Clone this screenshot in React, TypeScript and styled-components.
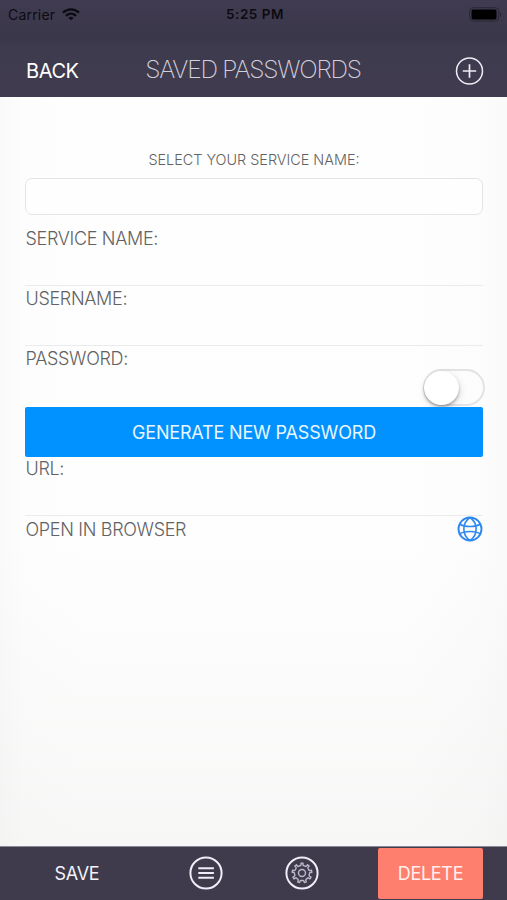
import React from 'react';
import styled, { createGlobalStyle } from 'styled-components';

const GlobalStyle = createGlobalStyle`
  * { box-sizing: border-box; }
  body { margin: 0; font-family: Inter, "Liberation Sans", sans-serif; }
  button { font-family: inherit; border: 0; padding: 0; background: none; }
`;

const Screen = styled.div`
  width: 507px;
  height: 900px;
  display: flex;
  flex-direction: column;
  overflow: hidden;
  background:
    linear-gradient(180deg, transparent 60%, rgba(120, 120, 110, 0.05) 95%),
    linear-gradient(90deg, #fafafa 0, #fdfdfd 25px, #fefefe 80px, #fefefe 410px, #fcfcfc 480px, #fafafa 507px);
`;

const Header = styled.header`
  height: 97px;
  flex: none;
  background: linear-gradient(#403b50 0, #3b374a 38px, #3f3b4e 48px, #403b4e 97px);
`;

const StatusBar = styled.div`
  height: 28px;
  display: grid;
  grid-template-columns: 1fr auto 1fr;
  align-items: center;
  padding: 0 5px 0 8px;
  color: #0c0b12;
  font-size: 14px;
`;

const Carrier = styled.div`
  display: flex;
  align-items: center;
  gap: 7px;
  letter-spacing: 0.2px;
`;

const Clock = styled.div`
  font-size: 13.5px;
  font-weight: 600;
  letter-spacing: 0.5px;
`;

const Battery = styled.svg`
  justify-self: end;
`;

const NavBar = styled.div`
  height: 69px;
  display: grid;
  grid-template-columns: 120px 1fr 120px;
  align-items: center;
  padding: 14px 23px 0 26px;
`;

const BackButton = styled.button`
  text-align: left;
  color: #fff;
  font-size: 20px;
  letter-spacing: -0.4px;
  padding-top: 2px;
`;

const Title = styled.h1`
  margin: 0 0 1px -4px;
  text-align: center;
  white-space: nowrap;
  color: #d3d0dc;
  font-size: 24.5px;
  font-weight: 200;
  letter-spacing: -1.24px;
`;

const AddButton = styled.button`
  justify-self: end;
  height: 30px;
  margin-top: 2px;
`;

const Form = styled.main`
  flex: 1;
  min-height: 0;
  display: flex;
  flex-direction: column;
  padding: 53px 24px 0 25px;
  color: #626262;
`;

const Hint = styled.div`
  height: 28px;
  line-height: 20px;
  text-align: center;
  font-size: 14.4px;
  font-weight: 300;
`;

const ServiceSelect = styled.div`
  height: 37px;
  flex: none;
  border: 1px solid #e5e5e8;
  border-radius: 7px;
  background: #fefefe;
  margin-bottom: 11px;
`;

const Field = styled.div<{ $height: number; $lined?: boolean }>`
  height: ${(p) => p.$height}px;
  flex: none;
  display: flex;
  justify-content: space-between;
  border-bottom: ${(p) => (p.$lined ? '1px solid #ebebeb' : '0')};
`;

const Label = styled.label<{ $lead?: number }>`
  padding-top: ${(p) => p.$lead ?? 1}px;
  padding-left: 0.5px;
  line-height: 24px;
  font-size: 18px;
  font-weight: 300;
  letter-spacing: -0.32px;
`;

const Toggle = styled.div`
  width: 62px;
  height: 37px;
  align-self: flex-end;
  margin: 0 -2px 1px 0;
  border: 2px solid #e3e3e5;
  border-radius: 19px;
`;

const Knob = styled.div`
  width: 35px;
  height: 34px;
  margin: -0.5px 0 0 -1px;
  border-radius: 50%;
  background: #fff;
  box-shadow: 0 2px 3px rgba(0, 0, 0, 0.28), 1px 3px 8px rgba(0, 0, 0, 0.12);
`;

const GenerateButton = styled.button`
  height: 50px;
  flex: none;
  border-radius: 2px;
  background: #0292ff;
  color: #e8f7ff;
  font-size: 18px;
  letter-spacing: -0.17px;
`;

const Footer = styled.footer`
  height: 54px;
  flex: none;
  display: grid;
  grid-template-columns: 154px 104px 88px 1fr;
  align-items: center;
  padding-right: 24px;
  border-top: 1px solid #8b8894;
  background: #3f3a4c;
`;

const FooterButton = styled.button<{ $danger?: boolean }>`
  width: ${(p) => (p.$danger ? '105px' : 'auto')};
  height: ${(p) => (p.$danger ? 51 : 40)}px;
  justify-self: ${(p) => (p.$danger ? 'end' : 'stretch')};
  border-radius: 2px;
  background: ${(p) => (p.$danger ? '#ff7f6e' : 'transparent')};
  color: ${(p) => (p.$danger ? '#fff0ee' : '#f4f2fa')};
  font-size: 18px;
  letter-spacing: -0.3px;
`;

const IconButton = styled.button`
  width: 36px;
  height: 36px;
  justify-self: center;
  margin-top: -1px;
`;

const gearPath = (() => {
  const teeth = 9;
  const step = (Math.PI * 2) / teeth;
  const profile: [number, number][] = [[-0.33, 7.5], [-0.19, 7.9], [-0.15, 9.9], [0.15, 9.9], [0.19, 7.9], [0.33, 7.5]];
  const points = Array.from({ length: teeth }).flatMap((_, i) =>
    profile.map(([offset, r]) => {
      const a = (i + offset) * step - Math.PI / 2;
      return `${(18 + r * Math.cos(a)).toFixed(2)} ${(18 + r * Math.sin(a)).toFixed(2)}`;
    }),
  );
  return `M${points.join('L')}Z`;
})();

const WifiIcon = () => (
  <svg width="18" height="13" viewBox="0 0 18 13" fill="none" stroke="#0c0b12" strokeWidth="2.4">
    <path d="M1 4.7C5.5.3 12.5.3 17 4.7M4 7.8c2.9-2.7 7.1-2.7 10 0" />
    <path d="M9 12.3 6.4 9.9a4 4 0 0 1 5.2 0Z" fill="#0c0b12" stroke="none" />
  </svg>
);

const PlusIcon = () => (
  <svg width="30" height="30" viewBox="0 0 30 30" fill="none" stroke="#eeecf5">
    <circle cx="15.5" cy="15" r="13" strokeWidth="1.5" />
    <path d="M8.8 15h13.4M15.5 8.3v13.4" strokeWidth="1.7" />
  </svg>
);

const GlobeIcon = () => (
  <svg width="26" height="26" viewBox="0 0 26 26" fill="none" stroke="#2e88f0" strokeWidth="1.6">
    <circle cx="13" cy="13" r="11.5" strokeWidth="1.9" />
    <path d="M13 1.5C4.8 7 4.8 19 13 24.5M13 1.5c8.2 5.5 8.2 17.5 0 23" />
    <path d="M2.4 8c5.2 3.3 16 3.3 21.2 0M2.4 18c5.2-3.3 16-3.3 21.2 0" />
  </svg>
);

const MenuIcon = () => (
  <svg width="36" height="36" viewBox="0 0 36 36" fill="none" stroke="#efedf7" strokeWidth="2">
    <circle cx="18" cy="18" r="15.6" />
    <path d="M10.3 13.2h15.6M10.3 18h15.6M10.3 22.7h15.6" />
  </svg>
);

const GearIcon = () => (
  <svg width="36" height="36" viewBox="0 0 36 36" fill="none" stroke="#efedf7">
    <circle cx="18" cy="18" r="15.6" strokeWidth="2" />
    <g stroke="#bdb9ca" strokeWidth="1.4" strokeLinejoin="round">
      <path d={gearPath} />
      <circle cx="18" cy="18" r="3.5" />
    </g>
  </svg>
);

export default function App() {
  return (
    <>
      <GlobalStyle />
      <Screen>
        <Header>
          <StatusBar>
            <Carrier>
              Carrier
              <WifiIcon />
            </Carrier>
            <Clock>5:25 PM</Clock>
            <Battery width="33" height="15" viewBox="0 0 33 15">
              <rect x="0.7" y="0.7" width="29" height="13.4" rx="3.5" fill="none" stroke="#292635" />
              <rect x="2.5" y="2.4" width="25" height="10" rx="1.7" fill="#000" />
              <path d="M31 5.2c1.6.5 1.6 4 0 4.5Z" fill="#292635" />
            </Battery>
          </StatusBar>
          <NavBar>
            <BackButton>BACK</BackButton>
            <Title>SAVED PASSWORDS</Title>
            <AddButton aria-label="Add"><PlusIcon /></AddButton>
          </NavBar>
        </Header>
        <Form>
          <Hint>SELECT YOUR SERVICE NAME:</Hint>
          <ServiceSelect />
          <Field $height={60} $lined><Label>SERVICE NAME:</Label></Field>
          <Field $height={60} $lined><Label>USERNAME:</Label></Field>
          <Field $height={61}>
            <Label>PASSWORD:</Label>
            <Toggle role="switch" aria-checked="false"><Knob /></Toggle>
          </Field>
          <GenerateButton>GENERATE NEW PASSWORD</GenerateButton>
          <Field $height={59} $lined><Label $lead={0}>URL:</Label></Field>
          <Field $height={28}>
            <Label $lead={2}>OPEN IN BROWSER</Label>
            <GlobeIcon />
          </Field>
        </Form>
        <Footer>
          <FooterButton>SAVE</FooterButton>
          <IconButton aria-label="Menu"><MenuIcon /></IconButton>
          <IconButton aria-label="Settings"><GearIcon /></IconButton>
          <FooterButton $danger>DELETE</FooterButton>
        </Footer>
      </Screen>
    </>
  );
}
